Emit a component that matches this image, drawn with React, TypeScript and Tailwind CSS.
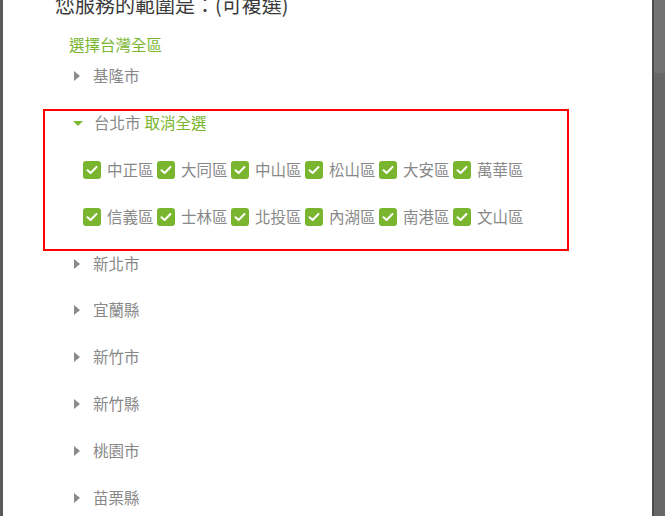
import React from "react";

const GREEN = "#79b52e";

function RightTri() {
  return (
    <svg width="6" height="10" viewBox="0 0 6 10" className="shrink-0">
      <polygon points="0,0 6,5 0,10" fill="#8a8a8a" />
    </svg>
  );
}

function DownTri() {
  return (
    <svg width="10" height="5" viewBox="0 0 10 5" className="shrink-0">
      <polygon points="0,0 10,0 5,5" fill={GREEN} />
    </svg>
  );
}

function Check() {
  return (
    <span className="w-[18px] h-[18px] rounded-[3px] bg-[#79b52e] flex items-center justify-center shrink-0">
      <svg width="12" height="10" viewBox="0 0 12 10">
        <polyline
          points="1.5,5.2 4.6,8 10.5,2"
          fill="none"
          stroke="white"
          strokeWidth="2"
          strokeLinecap="round"
          strokeLinejoin="round"
        />
      </svg>
    </span>
  );
}

const row1 = ["中正區", "大同區", "中山區", "松山區", "大安區", "萬華區"];
const row2 = ["信義區", "士林區", "北投區", "內湖區", "南港區", "文山區"];
const others = ["新北市", "宜蘭縣", "新竹市", "新竹縣", "桃園市", "苗栗縣"];

function DistrictRow({ items }: { items: string[] }) {
  return (
    <div className="h-[46.8px] flex items-center pl-[80px]">
      {items.map((d) => (
        <div key={d} className="flex items-center w-[74px] shrink-0">
          <Check />
          <span className="ml-[6px] text-[15.5px] leading-[20px] text-[#888888] -translate-y-[1px]">{d}</span>
        </div>
      ))}
    </div>
  );
}

function CityRow({ name }: { name: string }) {
  return (
    <div className="h-[46.8px] flex items-center pl-[71px]">
      <RightTri />
      <span className="ml-[13px] text-[15.5px] leading-[20px] text-[#888888] -translate-y-[1px]">{name}</span>
    </div>
  );
}

export default function App() {
  return (
    <div
      className="w-[665px] h-[516px] flex overflow-hidden"
      style={{ fontFamily: '"Noto Sans CJK TC", "Noto Sans", sans-serif' }}
    >
      <div className="w-[3px] bg-[#5a5a5a] shrink-0" />
      <div className="relative flex-1 bg-white overflow-hidden">
        <div className="flex flex-col">
          <div className="-mt-[8px] h-[26px] pl-[52px] text-[20px] leading-[26px] text-[#3a3a3a] whitespace-nowrap">
            您服務的範圍是：(可複選)
          </div>
          <div className="mt-[17px] h-[18px] pl-[66px] flex items-center text-[15.5px] leading-[18px] text-[#79b52e]">
            選擇台灣全區
          </div>
          <CityRow name="基隆市" />
          <div className="h-[46.8px] flex items-center pl-[70px]">
            <DownTri />
            <span className="ml-[11px] text-[15.5px] leading-[20px] text-[#888888] -translate-y-[1px]">台北市</span>
            <span className="ml-[4px] text-[15.5px] leading-[20px] text-[#79b52e] -translate-y-[1px]">取消全選</span>
          </div>
          <DistrictRow items={row1} />
          <DistrictRow items={row2} />
          {others.map((c) => (
            <CityRow key={c} name={c} />
          ))}
        </div>
        <div className="absolute left-[40px] top-[109px] w-[526px] h-[142px] border-2 border-[#ff0000] pointer-events-none" />
      </div>
      <div className="w-[13px] shrink-0 border-l-2 border-[#4e4e4e] flex flex-col">
        <div className="h-[73px] bg-[#737373]" />
        <div className="flex-1 bg-[#686868]" />
      </div>
    </div>
  );
}
